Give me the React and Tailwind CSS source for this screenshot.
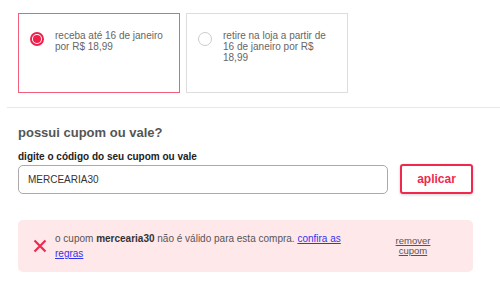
import React, { useState } from "react";

const font = { fontFamily: '"Liberation Sans", Arial, sans-serif' };

const App = () => {
  const [selected, setSelected] = useState(0);
  const [code, setCode] = useState("MERCEARIA30");

  const options = [
    "receba até 16 de janeiro por R$ 18,99",
    "retire na loja a partir de 16 de janeiro por R$ 18,99",
  ];

  return (
    <div className="w-[500px] h-[292px] bg-white overflow-hidden" style={font}>
      <div className="flex gap-[6px] pl-[18px] pt-[13px]">
        {options.map((text, i) => (
          <div
            key={i}
            onClick={() => setSelected(i)}
            className={
              i === selected
                ? "w-[162px] h-[80px] border border-[#f0607c] flex items-start pl-[11px] pt-[16px] cursor-pointer"
                : "w-[162px] h-[80px] border border-[#dddddd] flex items-start pl-[11px] pt-[16px] cursor-pointer"
            }
          >
            {i === selected ? (
              <div className="w-[14px] h-[14px] rounded-full border-2 border-[#f0204c] flex items-center justify-center shrink-0 mt-[2px]">
                <div className="w-[8px] h-[8px] rounded-full bg-[#f0204c]" />
              </div>
            ) : (
              <div className="w-[14px] h-[14px] rounded-full border border-[#cccccc] shrink-0 mt-[2px]" />
            )}
            <div className="ml-[11px] w-[110px] text-[10px] leading-[11px] text-[#666666]">
              {text}
            </div>
          </div>
        ))}
      </div>

      <div className="ml-[7px] mt-[14px] h-[1px] bg-[#e8e8e8]" />

      <div className="px-[18px]">
        <div className="mt-[17px] text-[13px] font-bold text-[#555555] leading-[16px]">
          possui cupom ou vale?
        </div>
        <div className="mt-[10px] text-[10px] font-bold text-[#222222] leading-[12px]">
          digite o código do seu cupom ou vale
        </div>
        <div className="mt-[1px] flex items-center gap-[12px]">
          <input
            value={code}
            onChange={(e) => setCode(e.target.value)}
            className="w-[370px] h-[29px] border border-[#aaaaaa] rounded-[5px] px-[9px] text-[10px] text-[#333333] outline-none"
            style={font}
          />
          <button className="w-[73px] h-[30px] border-2 border-[#f0284f] rounded-[3px] bg-white text-[#f0284f] font-bold text-[12px] shadow-[0_1px_3px_rgba(0,0,0,0.18)]">
            aplicar
          </button>
        </div>

        <div className="mt-[26px] w-[455px] h-[52px] bg-[#ffe8ea] rounded-[5px] flex items-center pl-[15px]">
          <svg width="14" height="14" viewBox="0 0 14 14" className="shrink-0">
            <path d="M1.5 1.5 L12.5 12.5 M12.5 1.5 L1.5 12.5" stroke="#f0284f" strokeWidth="2.2" />
          </svg>
          <div className="ml-[8px] w-[290px] text-[10px] leading-[15px] text-[#555555]">
            o cupom <span className="font-bold text-[#333333]">mercearia30</span> não é válido para esta compra.{" "}
            <a href="#" className="text-[#3333ee] underline">
              confira as regras
            </a>
          </div>
          <a
            href="#"
            className="ml-[42px] w-[52px] text-center text-[9.5px] leading-[10px] text-[#555555] underline"
          >
            remover cupom
          </a>
        </div>
      </div>
    </div>
  );
};

export default App;
